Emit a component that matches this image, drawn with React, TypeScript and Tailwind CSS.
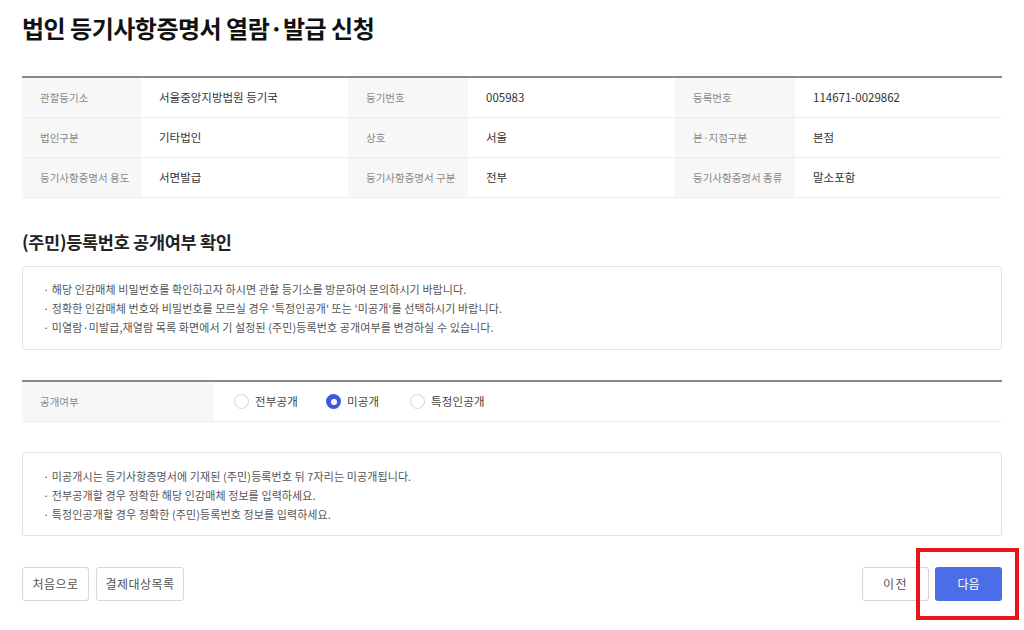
import React from "react";

const font = { fontFamily: '"Noto Sans CJK KR", "Noto Sans", sans-serif' };

type Cell = { label: string; value: string };

const rows: Cell[][] = [
  [
    { label: "관할등기소", value: "서울중앙지방법원 등기국" },
    { label: "등기번호", value: "005983" },
    { label: "등록번호", value: "114671-0029862" },
  ],
  [
    { label: "법인구분", value: "기타법인" },
    { label: "상호", value: "서울" },
    { label: "본·지점구분", value: "본점" },
  ],
  [
    { label: "등기사항증명서 용도", value: "서면발급" },
    { label: "등기사항증명서 구분", value: "전부" },
    { label: "등기사항증명서 종류", value: "말소포함" },
  ],
];

function Radio({ label, checked, className }: { label: string; checked?: boolean; className?: string }) {
  return (
    <label className={`flex items-center gap-[6px] ${className ?? ""}`}>
      {checked ? (
        <span className="w-[15px] h-[15px] rounded-full bg-[#3d5bd9] flex items-center justify-center">
          <span className="w-[6px] h-[6px] rounded-full bg-white" />
        </span>
      ) : (
        <span className="w-[15px] h-[15px] rounded-full border border-[#d4d4d4] bg-white" />
      )}
      <span className="text-[11.5px] tracking-[0.2px] text-[#444]">{label}</span>
    </label>
  );
}

function InfoBox({ lines, className }: { lines: string[]; className?: string }) {
  return (
    <div
      className={`border border-[#e2e2e2] rounded-[3px] pl-[20px] text-[11px] tracking-[0.1px] leading-[19px] text-[#555] ${className ?? ""}`}
    >
      {lines.map((l) => (
        <div key={l}>· {l}</div>
      ))}
    </div>
  );
}

export default function App() {
  return (
    <div className="w-[1024px] h-[630px] bg-white relative overflow-hidden" style={font}>
      <div className="px-[22px] pr-[22px]">
        <h1 className="pt-[12px] text-[24px] leading-[32px] font-bold text-[#111] tracking-[-0.5px]">
          법인 등기사항증명서 열람·발급 신청
        </h1>

        {/* summary table */}
        <div className="mt-[32px] w-[980px] border-t-2 border-[#8a8a8a]">
          {rows.map((row, i) => (
            <div
              key={i}
              className="grid grid-cols-[119px_207px_120px_207px_120px_207px] h-[40px] border-b border-[#ececec]"
            >
              {row.map((c) => (
                <React.Fragment key={c.label}>
                  <div className="bg-[#f7f7f7] flex items-center pl-[18px] text-[10.5px] text-[#888]">
                    {c.label}
                  </div>
                  <div className="flex items-center pl-[18px] text-[11.5px] text-[#333]">{c.value}</div>
                </React.Fragment>
              ))}
            </div>
          ))}
        </div>

        <h2 className="mt-[31px] text-[17.5px] leading-[26px] font-bold text-[#222] tracking-[-0.3px]">
          (주민)등록번호 공개여부 확인
        </h2>

        <InfoBox
          className="mt-[11px] w-[980px] h-[84px] pt-[13px]"
          lines={[
            "해당 인감매체 비밀번호를 확인하고자 하시면 관할 등기소를 방문하여 문의하시기 바랍니다.",
            "정확한 인감매체 번호와 비밀번호를 모르실 경우 '특정인공개' 또는 '미공개'를 선택하시기 바랍니다.",
            "미열람·미발급,재열람 목록 화면에서 기 설정된 (주민)등록번호 공개여부를 변경하실 수 있습니다.",
          ]}
        />

        {/* disclosure option */}
        <div className="mt-[30px] w-[980px] border-t-2 border-[#8a8a8a] border-b border-b-[#ececec] grid grid-cols-[192px_1fr] h-[42px]">
          <div className="bg-[#f7f7f7] flex items-center pl-[18px] text-[10.5px] text-[#888]">공개여부</div>
          <div className="flex items-center pl-[20px]">
            <Radio label="전부공개" className="w-[92px]" />
            <Radio label="미공개" checked className="w-[84px]" />
            <Radio label="특정인공개" />
          </div>
        </div>

        <InfoBox
          className="mt-[30px] w-[980px] h-[84px] pt-[14px]"
          lines={[
            "미공개시는 등기사항증명서에 기재된 (주민)등록번호 뒤 7자리는 미공개됩니다.",
            "전부공개할 경우 정확한 해당 인감매체 정보를 입력하세요.",
            "특정인공개할 경우 정확한 (주민)등록번호 정보를 입력하세요.",
          ]}
        />

        {/* actions */}
        <div className="mt-[31px] w-[980px] flex justify-between">
          <div className="flex gap-[7px]">
            <button className="h-[34px] w-[67px] border border-[#d6d6d6] rounded-[3px] text-[12px] tracking-[0.5px] text-[#555] bg-white">
              처음으로
            </button>
            <button className="h-[34px] w-[88px] border border-[#d6d6d6] rounded-[3px] text-[12px] tracking-[0.5px] text-[#555] bg-white">
              결제대상목록
            </button>
          </div>
          <div className="flex gap-[6px]">
            <button className="h-[34px] w-[67px] border border-[#d6d6d6] rounded-[3px] text-[12px] tracking-[1.5px] text-[#555] bg-white">
              이전
            </button>
            <button className="h-[34px] w-[67px] rounded-[3px] text-[12px] text-white bg-[#4b6ee8]">
              다음
            </button>
          </div>
        </div>
      </div>

      {/* highlight frame over the next button */}
      <div className="absolute left-[916px] top-[548px] w-[103px] h-[72px] border-[4px] border-[#e8141c] pointer-events-none" />
    </div>
  );
}
